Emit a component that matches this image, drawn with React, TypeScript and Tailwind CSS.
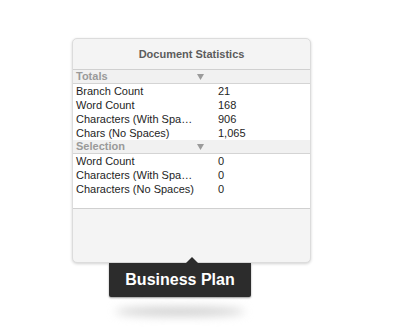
import React from 'react';

const totals = [
  ['Branch Count', '21'],
  ['Word Count', '168'],
  ['Characters (With Spaces)', '906'],
  ['Chars (No Spaces)', '1,065'],
];

const selection = [
  ['Word Count', '0'],
  ['Characters (With Spaces)', '0'],
  ['Characters (No Spaces)', '0'],
];

function Header({ title }: { title: string }) {
  return (
    <div className="flex h-[14px] items-center border-b border-[#d4d4d4] bg-[#f1f1f1] text-[11px] font-bold text-[#9a9a9a]">
      <div className="w-[123px] pl-[3px]">{title}</div>
      <div className="flex w-[8px] justify-center">
        <svg width="7" height="6" viewBox="0 0 7 6">
          <path d="M0 0 H7 L3.5 6 Z" fill="#9b9b9b" />
        </svg>
      </div>
    </div>
  );
}

function Row({ label, value }: { label: string; value: string }) {
  return (
    <div className="flex h-[14px] items-center text-[11px] text-[#1e1e1e]">
      <div className="w-[123px] truncate pl-[3px]">{label}</div>
      <div className="pl-[22px]">{value}</div>
    </div>
  );
}

export default function App() {
  return (
    <div className="min-h-screen bg-white pl-[72px] pt-[38px] font-['Liberation_Sans',Arial,sans-serif]">
      <div className="relative z-0 h-[225px] w-[239px] rounded-[5px] border border-[#dcdcdc] bg-[#f4f4f4] shadow-[0_1px_3px_rgba(0,0,0,0.18)]">
        <div className="flex h-[30px] items-center justify-center text-[11px] font-bold text-[#5c5c5c]">
          Document Statistics
        </div>
        <div className="h-[140px] border-y border-[#d0d0d0] bg-white">
          <Header title="Totals" />
          {totals.map(([l, v]) => (
            <Row key={l} label={l} value={v} />
          ))}
          <Header title="Selection" />
          {selection.map(([l, v]) => (
            <Row key={l + '2'} label={l} value={v} />
          ))}
        </div>
      </div>
      <div className="relative z-10 ml-[37px] w-[142px]">
        <svg className="absolute left-[76px] top-[-6px]" width="14" height="7" viewBox="0 0 14 7">
          <path d="M0 7 L7 0 L14 7 Z" fill="#2c2c2c" />
        </svg>
        <div className="flex h-[34px] items-center justify-center rounded-b-[2px] bg-[#2c2c2c] text-[16px] font-bold text-white shadow-[0_1px_2px_rgba(0,0,0,0.4)]">
          Business Plan
        </div>
        <div className="mx-auto mt-[10px] h-[9px] w-[130px] rounded-[50%] bg-[#cfcfcf] blur-[5px]" />
      </div>
    </div>
  );
}
